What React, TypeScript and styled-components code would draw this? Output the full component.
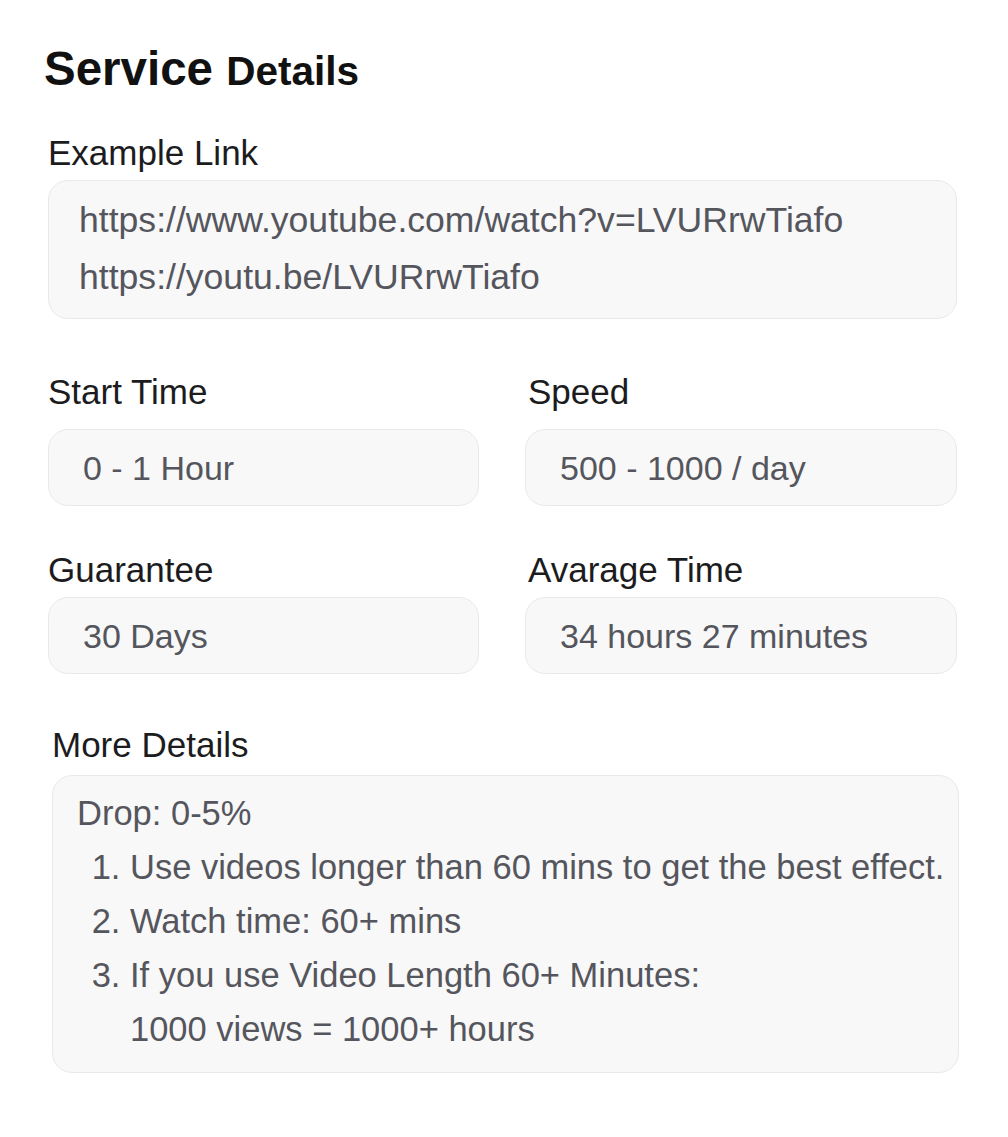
import React from "react";
import styled, { createGlobalStyle } from "styled-components";

const GlobalStyle = createGlobalStyle`
  html, body {
    margin: 0;
    padding: 0;
    background: #ffffff;
  }
  body {
    font-family: "Liberation Sans", Arial, sans-serif;
    -webkit-font-smoothing: antialiased;
  }
`;

const Page = styled.div`
  box-sizing: border-box;
  width: 1008px;
  padding: 41px 51px 60px 48px;
  display: flex;
  flex-direction: column;
`;

const Title = styled.h1`
  margin: 0 0 0 -4px;
  font-size: 47.5px;
  line-height: 56px;
  font-weight: 700;
  color: #111111;
`;

const TitleSmall = styled.span`
  font-size: 40.5px;
`;

const Field = styled.section<{ $top: number; $shift?: number }>`
  display: flex;
  flex-direction: column;
  margin-top: ${(p) => p.$top}px;
  margin-left: ${(p) => p.$shift ?? 0}px;
  min-width: 0;
`;

const Label = styled.div<{ $gap: number }>`
  font-size: 35px;
  line-height: 40px;
  color: #1c1c1e;
  margin-bottom: ${(p) => p.$gap}px;
`;

const Box = styled.div`
  box-sizing: border-box;
  background: #f8f8f8;
  border: 1px solid #e9e9ea;
  border-radius: 20px;
  color: #55565d;
`;

const LinkBox = styled(Box)`
  padding: 11px 30px 12px 30px;
  font-size: 35.6px;
  line-height: 57px;
`;

const ValueBox = styled(Box)`
  height: 77px;
  display: flex;
  align-items: center;
  padding: 0 32px 0 34px;
  font-size: 34px;
  line-height: 40px;
`;

const Grid = styled.div<{ $top: number }>`
  display: grid;
  grid-template-columns: 431px 432px;
  column-gap: 46px;
  margin-top: ${(p) => p.$top}px;
`;

const GridField = styled.div`
  display: flex;
  flex-direction: column;
`;

const GridLabel = styled(Label)<{ $indent?: number }>`
  padding-left: ${(p) => p.$indent ?? 0}px;
`;

const DetailsBox = styled(Box)`
  width: 907px;
  padding: 10px 10px 16px 24px;
  font-size: 34.5px;
  line-height: 54px;
`;

const DetailsLine = styled.p`
  margin: 0;
`;

const DetailsList = styled.ol`
  margin: 0;
  padding-left: 53px;
`;

const DetailsItem = styled.li`
  padding-left: 0;
  white-space: nowrap;
`;

type Pair = { label: string; value: string; indent?: number };

const rows: Pair[][] = [
  [
    { label: "Start Time", value: "0 - 1 Hour" },
    { label: "Speed", value: "500 - 1000 / day", indent: 3 },
  ],
  [
    { label: "Guarantee", value: "30 Days" },
    { label: "Avarage Time", value: "34 hours 27 minutes", indent: 3 },
  ],
];

export default function App() {
  return (
    <>
      <GlobalStyle />
      <Page>
        <Title>
          Service <TitleSmall>Details</TitleSmall>
        </Title>

        <Field $top={34}>
          <Label $gap={7}>Example Link</Label>
          <LinkBox>
            <div>https://www.youtube.com/watch?v=LVURrwTiafo</div>
            <div>https://youtu.be/LVURrwTiafo</div>
          </LinkBox>
        </Field>

        <Grid $top={53}>
          {rows[0].map((f) => (
            <GridField key={f.label}>
              <GridLabel $gap={17} $indent={f.indent}>
                {f.label}
              </GridLabel>
              <ValueBox>{f.value}</ValueBox>
            </GridField>
          ))}
        </Grid>

        <Grid $top={44}>
          {rows[1].map((f) => (
            <GridField key={f.label}>
              <GridLabel $gap={7} $indent={f.indent}>
                {f.label}
              </GridLabel>
              <ValueBox>{f.value}</ValueBox>
            </GridField>
          ))}
        </Grid>

        <Field $top={51} $shift={4}>
          <Label $gap={10}>More Details</Label>
          <DetailsBox>
            <DetailsLine>Drop: 0-5%</DetailsLine>
            <DetailsList>
              <DetailsItem>Use videos longer than 60 mins to get the best effect.</DetailsItem>
              <DetailsItem>Watch time: 60+ mins</DetailsItem>
              <DetailsItem>
                If you use Video Length 60+ Minutes:
                <br />
                1000 views = 1000+ hours
              </DetailsItem>
            </DetailsList>
          </DetailsBox>
        </Field>
      </Page>
    </>
  );
}
